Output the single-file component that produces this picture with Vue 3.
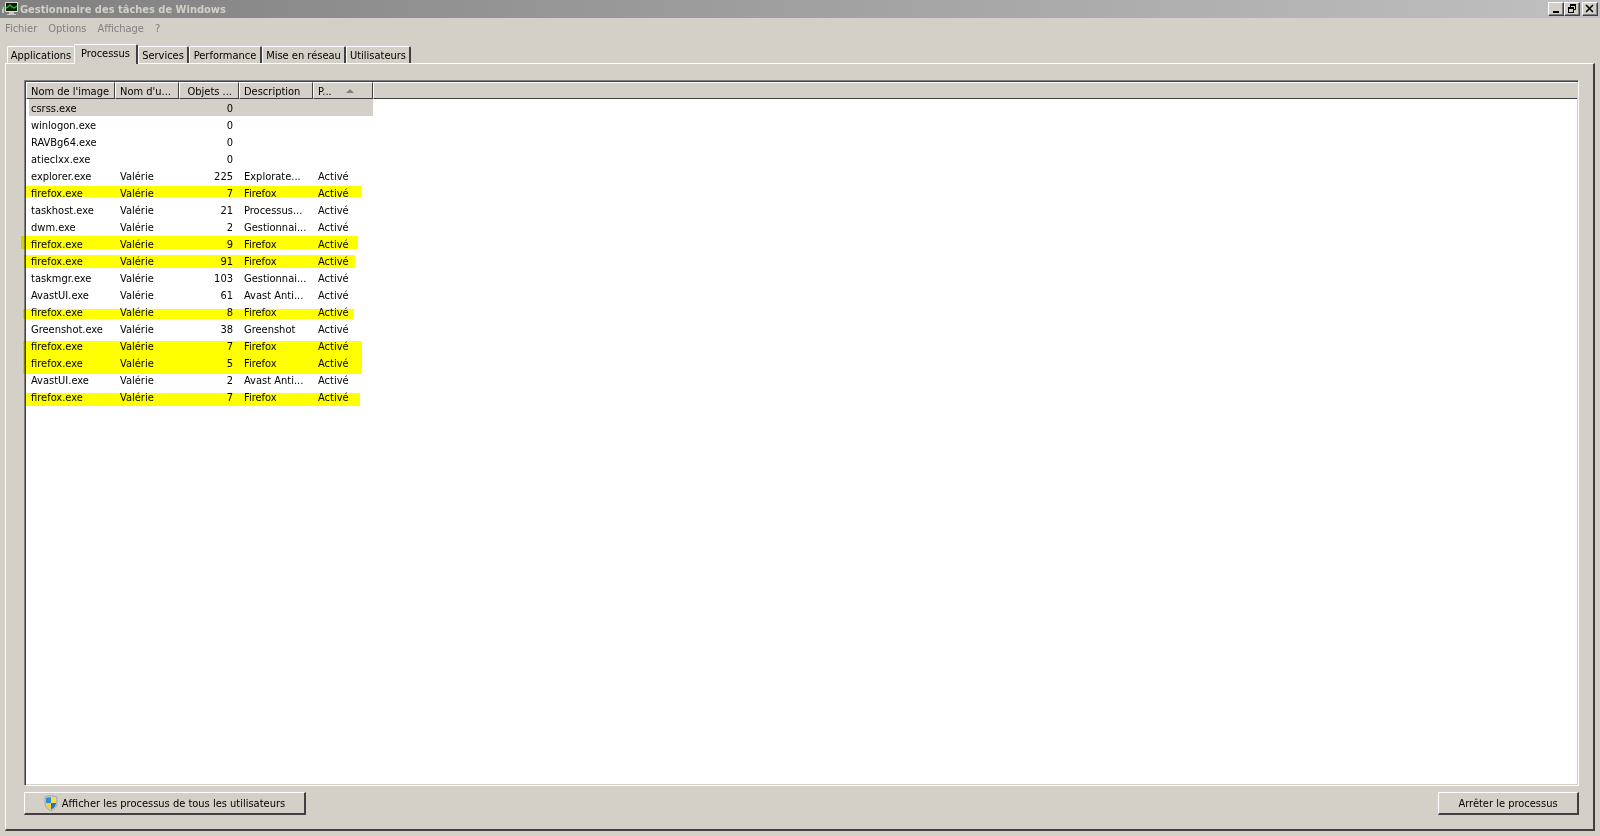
<script setup>
import { ref } from 'vue'

const menus = ['Fichier', 'Options', 'Affichage', '?']
const tabs = ['Applications', 'Processus', 'Services', 'Performance', 'Mise en réseau', 'Utilisateurs']
const active = ref('Processus')
const selected = ref(0)

const rows = [
  ['csrss.exe', '', 0, '', ''],
  ['winlogon.exe', '', 0, '', ''],
  ['RAVBg64.exe', '', 0, '', ''],
  ['atieclxx.exe', '', 0, '', ''],
  ['explorer.exe', 'Valérie', 225, 'Explorate...', 'Activé'],
  ['firefox.exe', 'Valérie', 7, 'Firefox', 'Activé'],
  ['taskhost.exe', 'Valérie', 21, 'Processus...', 'Activé'],
  ['dwm.exe', 'Valérie', 2, 'Gestionnai...', 'Activé'],
  ['firefox.exe', 'Valérie', 9, 'Firefox', 'Activé'],
  ['firefox.exe', 'Valérie', 91, 'Firefox', 'Activé'],
  ['taskmgr.exe', 'Valérie', 103, 'Gestionnai...', 'Activé'],
  ['AvastUI.exe', 'Valérie', 61, 'Avast Anti...', 'Activé'],
  ['firefox.exe', 'Valérie', 8, 'Firefox', 'Activé'],
  ['Greenshot.exe', 'Valérie', 38, 'Greenshot', 'Activé'],
  ['firefox.exe', 'Valérie', 7, 'Firefox', 'Activé'],
  ['firefox.exe', 'Valérie', 5, 'Firefox', 'Activé'],
  ['AvastUI.exe', 'Valérie', 2, 'Avast Anti...', 'Activé'],
  ['firefox.exe', 'Valérie', 7, 'Firefox', 'Activé'],
]

// Marker strokes drawn over the list: left, top, width, height
const marks = [
  [1, 105, 336, 11],
  [-4, 155, 337, 13],
  [-1, 174, 331, 13],
  [-2, 228, 331, 10],
  [-2, 260, 339, 33],
  [1, 312, 334, 13],
]
</script>

<template>
  <div class="window">
    <header class="titlebar">
      <svg class="app-icon" width="16" height="14" viewBox="0 0 16 14" aria-hidden="true">
        <path d="M0 5h2v6H0z" fill="#c8c8c8" />
        <path d="M0 5h1v2H0z" fill="#5fae5f" />
        <rect x="3" y="0" width="13" height="10" rx="1" fill="#dcdcdc" />
        <rect x="4" y="1" width="11" height="8" fill="#082008" />
        <path d="M4 6l2-1 2-2 2 2 2 1 3-2" fill="none" stroke="#24b634" stroke-width="1.5" />
        <path d="M7 10h5v2h2v1H5v-1h2z" fill="#c8c8c8" />
      </svg>
      <h1>Gestionnaire des tâches de Windows</h1>
      <div class="controls">
        <button type="button" aria-label="Réduire">
          <svg width="12" height="10" viewBox="0 0 12 10"><path d="M3 7h6v2H3z" /></svg>
        </button>
        <button type="button" aria-label="Restaurer">
          <svg width="12" height="10" viewBox="0 0 12 10">
            <path d="M4 0h6v6H8V5h1V2H5v1H4zM2 3h6v6H2zM3 5v3h4V5z" fill-rule="evenodd" />
          </svg>
        </button>
        <button type="button" class="close" aria-label="Fermer">
          <svg width="12" height="10" viewBox="0 0 12 10">
            <path d="M2 1l7 7M9 1L2 8" fill="none" stroke="#000" stroke-width="1.6" />
          </svg>
        </button>
      </div>
    </header>

    <nav class="menu">
      <button v-for="m in menus" :key="m" type="button">{{ m }}</button>
    </nav>

    <main class="body">
      <div class="tabs" role="tablist">
        <button
          v-for="t in tabs"
          :key="t"
          type="button"
          role="tab"
          :aria-selected="t === active"
          :class="{ active: t === active }"
          @click="active = t"
        >{{ t }}</button>
      </div>

      <section class="panel">
        <div class="list">
          <table>
            <colgroup>
              <col class="c-name" /><col class="c-user" /><col class="c-obj" />
              <col class="c-desc" /><col class="c-virt" /><col />
            </colgroup>
            <thead>
              <tr>
                <th>Nom de l'image</th>
                <th>Nom d'u...</th>
                <th class="num">Objets ...</th>
                <th>Description</th>
                <th>P...<span class="sort"></span></th>
                <th class="rest"></th>
              </tr>
            </thead>
            <tbody>
              <tr v-for="(r, i) in rows" :key="i" :class="{ selected: i === selected }" @click="selected = i">
                <td v-for="(c, j) in r" :key="j" :class="{ num: j === 2 }">{{ c }}</td>
                <td class="rest"></td>
              </tr>
            </tbody>
          </table>
          <div
            v-for="(m, i) in marks"
            :key="i"
            class="mark"
            :style="{ left: m[0] + 'px', top: m[1] + 'px', width: m[2] + 'px', height: m[3] + 'px' }"
          ></div>
        </div>

        <footer class="actions">
          <button type="button" class="push all-users">
            <svg width="14" height="16" viewBox="0 0 14 16" aria-hidden="true">
              <path d="M7 0l2 1 4 1v6c0 4-3 6-6 8-3-2-6-4-6-8V2l4-1z" fill="#c4cad0" stroke="#8a929a" stroke-width=".6" />
              <path d="M7 2v6H2V3l3-.5z" fill="#2b8cd8" />
              <path d="M7 2l2 .5 3 .5v5H7z" fill="#f8dc40" />
              <path d="M2 8h5v6.500C4 13 2 11 2 8z" fill="#f8d030" />
              <path d="M12 8H7v6.500C10 13 12 11 12 8z" fill="#2272bc" />
            </svg>
            <span>Afficher les processus de tous les utilisateurs</span>
          </button>
          <button type="button" class="push stop"><span>Arrêter le processus</span></button>
        </footer>
      </section>
    </main>
  </div>
</template>

<style>
html,
body {
  background: #d4d0c8;
}
</style>

<style scoped>
.window {
  display: flex;
  flex-direction: column;
  box-sizing: border-box;
  min-height: 100vh;
  background: #d4d0c8;
  color: #000;
  font: 11px/16px "DejaVu Sans Condensed", "DejaVu Sans", sans-serif;
}
button {
  margin: 0;
  padding: 0;
  border: 0;
  background: none;
  color: inherit;
  font: inherit;
  white-space: nowrap;
}
.titlebar {
  display: flex;
  align-items: center;
  height: 18px;
  padding: 0 2px;
  background: linear-gradient(90deg, #808080, #c0c0c0);
}
.app-icon {
  margin-right: 2px;
}
h1 {
  flex: 1;
  margin: 0;
  padding-top: 2px;
  color: #d4d0c8;
  font-size: 11px;
  font-weight: bold;
}
.controls {
  display: flex;
}
.controls button {
  display: flex;
  align-items: center;
  justify-content: center;
  box-sizing: border-box;
  width: 16px;
  height: 14px;
  background: #d4d0c8;
  border: 1px solid;
  border-color: #fff #404040 #404040 #fff;
  box-shadow: inset -1px -1px #808080;
}
.controls svg {
  flex: none;
}
.controls .close {
  margin-left: 2px;
}
.menu {
  display: flex;
  gap: 11px;
  padding: 3px 5px 7px;
  color: #808080;
}
.body {
  flex: 1;
  display: flex;
  flex-direction: column;
  padding: 0 5px 5px;
}
.tabs {
  display: grid;
  grid-template-columns: 67px 64px 51px 73px 84px 65px;
  align-items: end;
  height: 19px;
  padding-left: 2px;
}
.tabs button {
  height: 17px;
  padding-top: 2px;
  border: solid;
  border-width: 1px 2px 0 1px;
  border-color: #fff #404040 #fff #fff;
  border-radius: 2px 2px 0 0;
  line-height: 14px;
}
.tabs button:first-child {
  border-right: 0;
}
.tabs .active {
  position: relative;
  height: 20px;
  margin-bottom: -1px;
  padding-bottom: 3px;
  background: #d4d0c8;
}
.panel {
  flex: 1;
  display: flex;
  flex-direction: column;
  padding: 16px 14px 14px 18px;
  border: solid;
  border-width: 1px 2px 2px 1px;
  border-color: #fff #404040 #404040 #fff;
}
.list {
  position: relative;
  flex: 1;
  background: #fff;
  border: 1px solid;
  border-color: #808080 #fff #fff #808080;
  padding: 1px;
  box-shadow: inset 1px 1px #404040, inset -1px -1px #d4d0c8;
}
table {
  width: 100%;
  table-layout: fixed;
  border-collapse: separate;
  border-spacing: 0;
}
.c-name { width: 89px; }
.c-user { width: 64px; }
.c-obj { width: 60px; }
.c-desc { width: 74px; }
.c-virt { width: 60px; }
th,
td {
  box-sizing: border-box;
  height: 17px;
  padding: 2px 5px 0;
  line-height: 15px;
  font-weight: normal;
  text-align: left;
  white-space: nowrap;
}
th {
  background: #d4d0c8;
  border: 1px solid;
  border-color: #fff #404040 #404040 #fff;
  padding: 2px 4px 0;
  line-height: 13px;
}
.rest {
  border-right: 0;
}
.num {
  text-align: right;
}
th.num {
  padding-right: 6px;
}
td.num {
  padding-right: 6px;
}
.selected td:not(.rest) {
  background: #d4d0c8;
}
.selected td:first-child {
  box-shadow: inset 3px 0 #fff;
}
.sort {
  display: inline-block;
  margin-left: 14px;
  vertical-align: 2px;
  border: solid transparent;
  border-width: 0 4px 4px;
  border-bottom-color: #808080;
}
.mark {
  position: absolute;
  background: #ff0;
  mix-blend-mode: multiply;
  pointer-events: none;
}
.actions {
  display: flex;
  justify-content: space-between;
  padding-top: 6px;
}
.push {
  display: flex;
  align-items: center;
  justify-content: center;
  gap: 4px;
  box-sizing: border-box;
  height: 23px;
  border: solid;
  border-width: 1px 2px 2px 1px;
  border-color: #fff #404040 #404040 #fff;
}
.push span {
  padding-top: 2px;
}
.all-users {
  width: 282px;
}
.stop {
  width: 141px;
}
</style>
